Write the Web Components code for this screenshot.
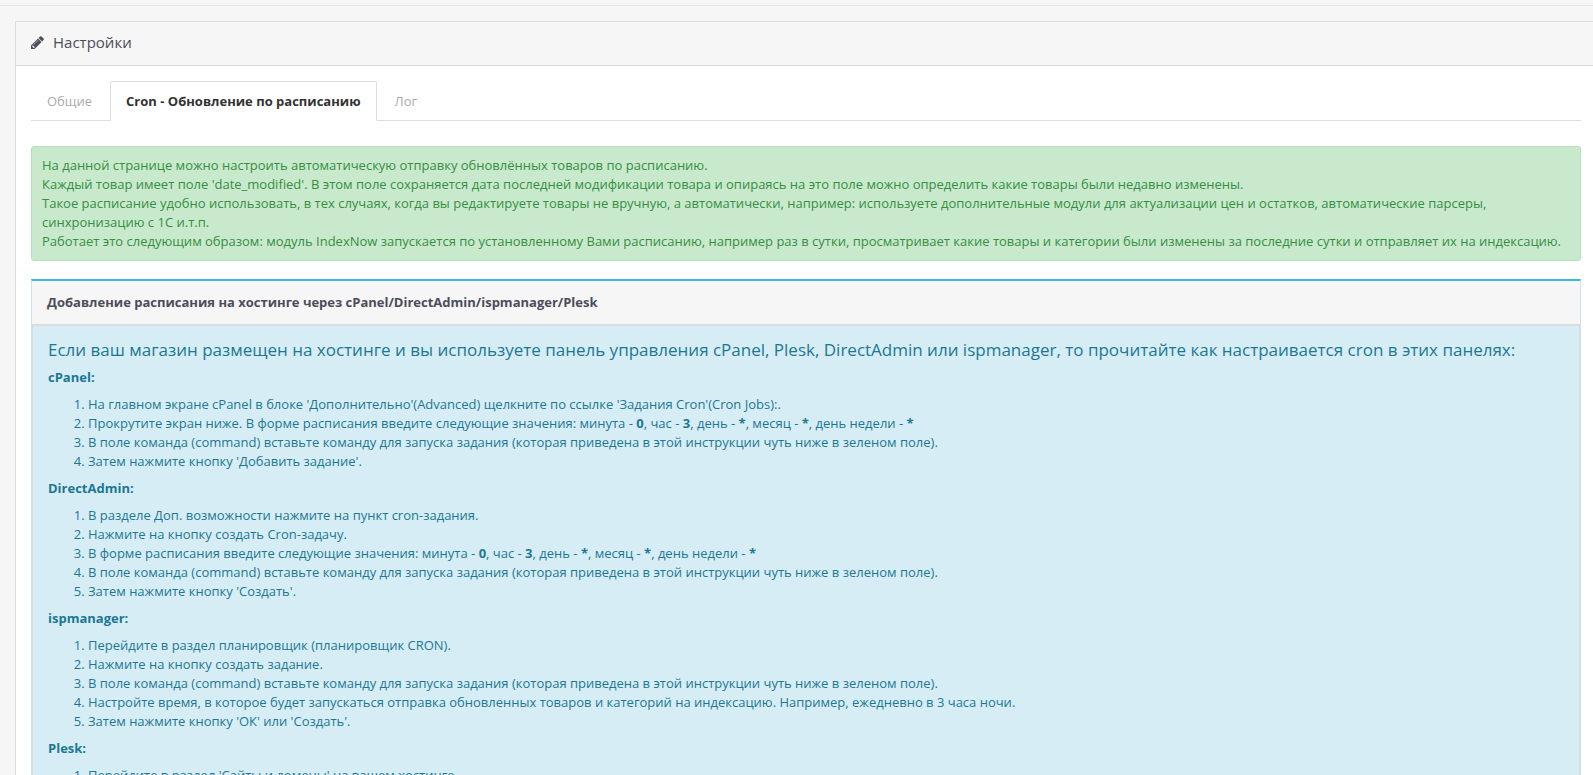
<!DOCTYPE html>
<html lang="ru">
<head>
<meta charset="utf-8">
<title>Настройки</title>
<style>
  html, body { height: 100%; }
  body {
    margin: 0;
    overflow: hidden;
    background: #f6f6f6;
    color: #666;
    font: 13px/19px "Open Sans", "Noto Sans", sans-serif;
  }
</style>
</head>
<body>
<settings-page>
  <settings-panel>
    <span slot="title">Настройки</span>
    <tab-bar>
      <tab-link href="#general">Общие</tab-link>
      <tab-link href="#cron" active>Cron - Обновление по расписанию</tab-link>
      <tab-link href="#log">Лог</tab-link>
    </tab-bar>
    <success-note>
      На данной странице можно настроить автоматическую отправку обновлённых товаров по расписанию.<br>
      Каждый товар имеет поле 'date_modified'. В этом поле сохраняется дата последней модификации товара и опираясь на это поле можно определить какие товары были недавно изменены.<br>
      Такое расписание удобно использовать, в тех случаях, когда вы редактируете товары не вручную, а автоматически, например: используете дополнительные модули для актуализации цен и остатков, автоматические парсеры, синхронизацию с 1С и.т.п.<br>
      Работает это следующим образом: модуль IndexNow запускается по установленному Вами расписанию, например раз в сутки, просматривает какие товары и категории были изменены за последние сутки и отправляет их на индексацию.
    </success-note>
    <guide-panel>
      <span slot="title">Добавление расписания на хостинге через cPanel/DirectAdmin/ispmanager/Plesk</span>
      <span slot="lead">Если ваш магазин размещен на хостинге и вы используете панель управления cPanel, Plesk, DirectAdmin или ispmanager, то прочитайте как настраивается cron в этих панелях:</span>
      <guide-steps name="cPanel:">
        <li>На главном экране cPanel в блоке 'Дополнительно'(Advanced) щелкните по ссылке 'Задания Cron'(Cron Jobs):.</li>
        <li>Прокрутите экран ниже. В форме расписания введите следующие значения: минута - <b>0</b>, час - <b>3</b>, день - <b>*</b>, месяц - <b>*</b>, день недели - <b>*</b></li>
        <li>В поле команда (command) вставьте команду для запуска задания (которая приведена в этой инструкции чуть ниже в зеленом поле).</li>
        <li>Затем нажмите кнопку 'Добавить задание'.</li>
      </guide-steps>
      <guide-steps name="DirectAdmin:">
        <li>В разделе Доп. возможности нажмите на пункт cron-задания.</li>
        <li>Нажмите на кнопку создать Cron-задачу.</li>
        <li>В форме расписания введите следующие значения: минута - <b>0</b>, час - <b>3</b>, день - <b>*</b>, месяц - <b>*</b>, день недели - <b>*</b></li>
        <li>В поле команда (command) вставьте команду для запуска задания (которая приведена в этой инструкции чуть ниже в зеленом поле).</li>
        <li>Затем нажмите кнопку 'Создать'.</li>
      </guide-steps>
      <guide-steps name="ispmanager:">
        <li>Перейдите в раздел планировщик (планировщик CRON).</li>
        <li>Нажмите на кнопку создать задание.</li>
        <li>В поле команда (command) вставьте команду для запуска задания (которая приведена в этой инструкции чуть ниже в зеленом поле).</li>
        <li>Настройте время, в которое будет запускаться отправка обновленных товаров и категорий на индексацию. Например, ежедневно в 3 часа ночи.</li>
        <li>Затем нажмите кнопку 'ОК' или 'Создать'.</li>
      </guide-steps>
      <guide-steps name="Plesk:">
        <li>Перейдите в раздел 'Сайты и домены' на вашем хостинге.</li>
      </guide-steps>
    </guide-panel>
  </settings-panel>
</settings-page>

<script>
const define = (name, html, setup) => {
  const template = document.createElement('template');
  template.innerHTML = html;
  customElements.define(name, class extends HTMLElement {
    constructor() {
      super();
      this.attachShadow({ mode: 'open' }).append(template.content.cloneNode(true));
    }
    connectedCallback() {
      if (setup) setup(this, this.shadowRoot);
    }
  });
};

define('settings-page', `
  <style>
    :host { display: block; padding-top: 5px; }
    main { border-top: 1px solid #e7e7e7; padding: 15px 0 0 15px; }
  </style>
  <main><slot></slot></main>
`);

define('settings-panel', `
  <style>
    :host { display: block; background: #fff; border: 1px solid #dcdcdc; border-right: 0; }
    header {
      display: flex; align-items: center; gap: 9px;
      padding: 12px 15px 14px; background: #f6f6f6; border-bottom: 1px solid #dcdcdc;
      color: #4c4d5a;
    }
    h1 { margin: 0; font-size: 15px; font-weight: 400; line-height: 17px; }
    svg { width: 13px; height: 13px; fill: currentColor; }
    .body { padding: 15px 12px 15px 15px; }
  </style>
  <header>
    <svg viewBox="0 0 1536 1536" aria-hidden="true"><path d="M363 1408l91-91-235-235-91 91v107h128v128h107zM886 480q0-22-22-22-10 0-17 7l-542 542q-7 7-7 17 0 22 22 22 10 0 17-7l542-542q7-7 7-17zM832 288l416 416-832 832H0v-416zM1515 384q0 53-37 90l-166 166-416-416 166-165q36-38 90-38 53 0 91 38l235 234q37 39 37 91z"/></svg>
    <h1><slot name="title"></slot></h1>
  </header>
  <div class="body"><slot></slot></div>
`);

define('tab-bar', `
  <style>
    :host { display: block; margin-bottom: 25px; border-bottom: 1px solid #ddd; }
    nav { display: flex; gap: 2px; margin-bottom: -1px; }
  </style>
  <nav><slot></slot></nav>
`);

define('tab-link', `
  <style>
    :host { display: block; }
    a {
      display: block; padding: 10px 15px 9px; color: #aaa; text-decoration: none;
      border: 1px solid transparent; border-radius: 2px 2px 0 0;
    }
    :host([active]) a {
      color: #333; font-weight: 700; background: #fff;
      border-color: #ddd; border-bottom-color: #fff;
    }
  </style>
  <a><slot></slot></a>
`, (host, root) => {
  const link = root.querySelector('a');
  link.href = host.getAttribute('href');
  if (host.hasAttribute('active')) link.setAttribute('aria-current', 'page');
});

define('success-note', `
  <style>
    :host {
      display: block; margin-bottom: 18px; padding: 9px 10px;
      color: #348f43; background: #c9e9cc;
      border: 1px solid #b3e0b8; border-radius: 3px;
    }
  </style>
  <slot></slot>
`);

define('guide-panel', `
  <style>
    :host { display: block; border: 1px solid #c8e3f1; border-top: 2px solid #3db9e0; }
    header { padding: 12px 15px; background: #f6f6f6; border-bottom: 1px solid #dcdcdc; }
    h2 { margin: 0; font-size: 13px; font-weight: 700; line-height: 19px; color: #4c4d5a; }
    .body { padding: 15px; color: #1b7893; background: #d7edf5; border: 1px solid #dcdcdc; }
    h3 { margin: 0 0 10px; font-size: 17px; font-weight: 400; line-height: 17px; }
  </style>
  <header><h2><slot name="title"></slot></h2></header>
  <div class="body">
    <h3><slot name="lead"></slot></h3>
    <slot></slot>
  </div>
`);

define('guide-steps', `
  <style>
    :host { display: block; }
    h4 { margin: 0; font-size: 13px; font-weight: 700; line-height: 19px; }
    ol { margin: 8px 0; padding-left: 40px; }
  </style>
  <h4></h4>
  <ol><slot></slot></ol>
`, (host, root) => {
  root.querySelector('h4').textContent = host.getAttribute('name');
});
</script>
</body>
</html>
